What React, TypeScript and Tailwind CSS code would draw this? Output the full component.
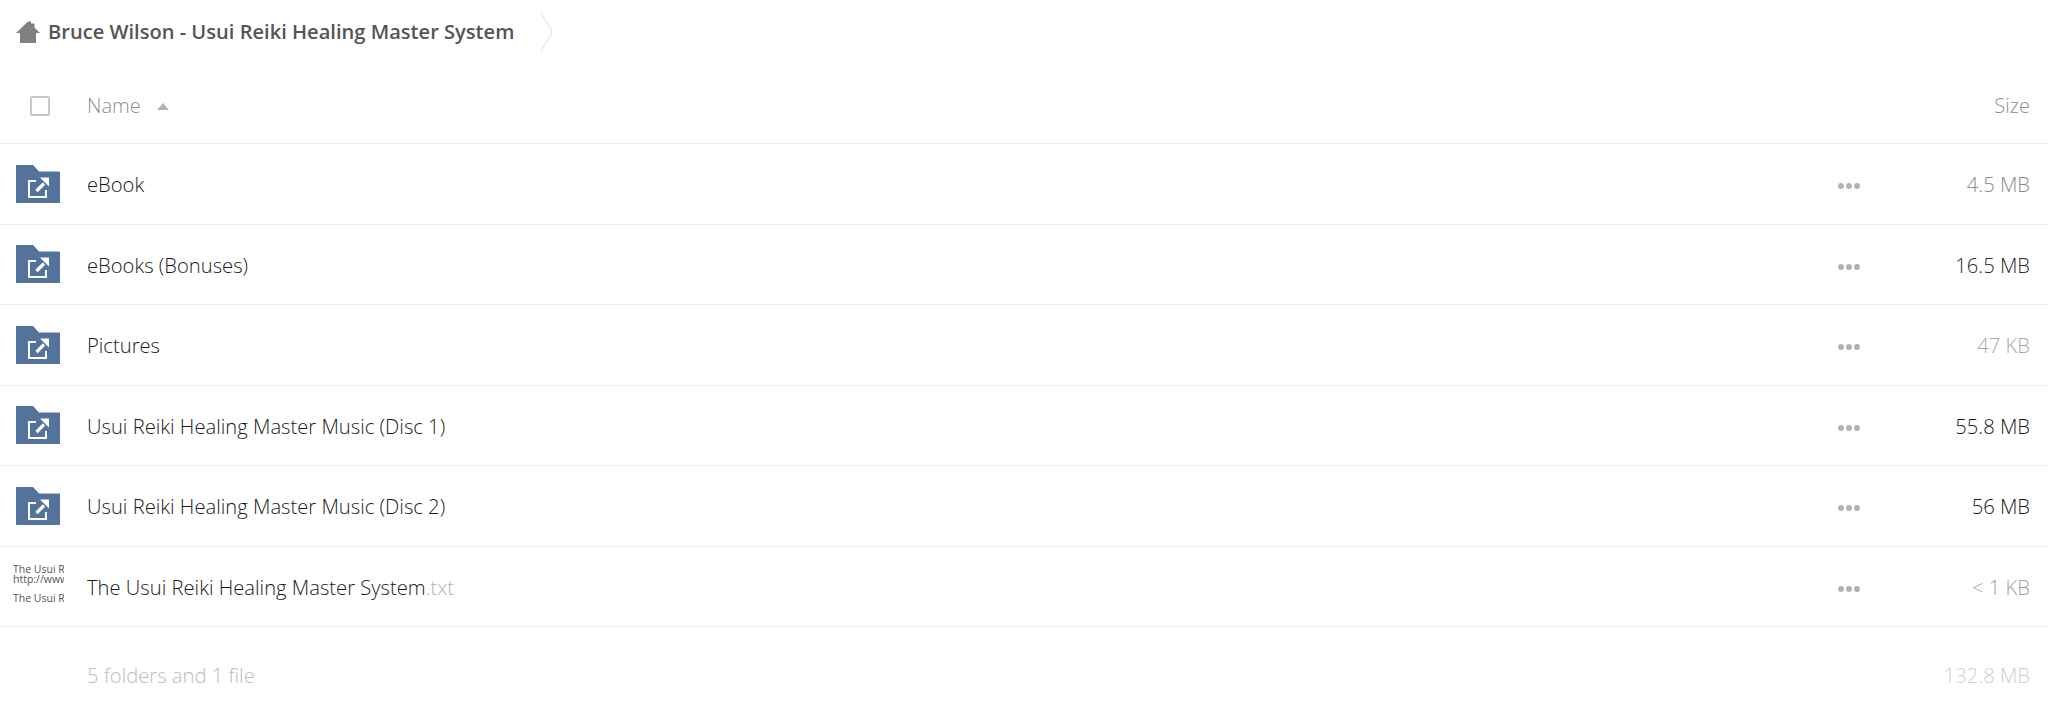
import React from "react";

const rows = [
  { name: "eBook", size: "4.5 MB", sizeColor: "text-[#8c8c8c]" },
  { name: "eBooks (Bonuses)", size: "16.5 MB", sizeColor: "text-[#2a2a2a]" },
  { name: "Pictures", size: "47 KB", sizeColor: "text-[#a8a8a8]" },
  { name: "Usui Reiki Healing Master Music (Disc 1)", size: "55.8 MB", sizeColor: "text-[#1a1a1a]" },
  { name: "Usui Reiki Healing Master Music (Disc 2)", size: "56 MB", sizeColor: "text-[#1a1a1a]" },
];

function FolderIcon() {
  return (
    <svg width="44" height="38" viewBox="0 0 44 38" className="block">
      <path
        d="M1 0H17L23 6.5H43C43.6 6.5 44 6.9 44 7.5V37C44 37.6 43.6 38 43 38H1C.4 38 0 37.6 0 37V1C0 .4 .4 0 1 0Z"
        fill="#54739c"
      />
      <path d="M20 16H13V32H30V25" fill="none" stroke="#fff" strokeWidth="2" />
      <path d="M20.5 26L28 18.5" stroke="#fff" strokeWidth="3.2" />
      <path d="M24 12.5H33V21.5Z" fill="#fff" />
    </svg>
  );
}

function HomeIcon() {
  return (
    <svg width="24" height="22" viewBox="0 0 24 22" className="block">
      <path d="M0 12L12 0.5H15V2.5L18.5 2.5V6.5L24 12H20V22H4V12Z" fill="#808080" />
    </svg>
  );
}

function Dots() {
  return (
    <div className="flex w-[23px] gap-[2px]">
      <span className="h-[6px] w-[6px] rounded-full bg-[#b3b3b3]" />
      <span className="h-[6px] w-[6px] rounded-full bg-[#b3b3b3]" />
      <span className="h-[6px] w-[6px] rounded-full bg-[#b3b3b3]" />
    </div>
  );
}

function Row({ icon, children, size, sizeColor }: { icon: React.ReactNode; children: React.ReactNode; size: string; sizeColor: string }) {
  return (
    <div className="flex h-[80.5px] items-center border-b border-[#eeeeee]">
      <div className="flex w-[87px] shrink-0 pl-4">{icon}</div>
      <div className="flex-1 pt-[1px] text-[20.2px] font-light text-[#1a1a1a]">{children}</div>
      <div className="mt-[5px]">
        <Dots />
      </div>
      <div className={`w-[187px] pt-[1px] pr-[18px] text-right text-[20.2px] font-light ${sizeColor}`}>{size}</div>
    </div>
  );
}

export default function App() {
  return (
    <div className="h-[722px] overflow-hidden bg-white font-['Open_Sans',sans-serif]">
      <div className="flex h-[63px] items-center pl-4">
        <HomeIcon />
        <span className="ml-[8px] pt-[1px] text-[20.1px] font-semibold text-[#555555]">Bruce Wilson - Usui Reiki Healing Master System</span>
        <svg width="14" height="40" viewBox="0 0 14 40" className="ml-[26px] block">
          <path d="M1 1L12.5 20L1 39" fill="none" stroke="#dddddd" strokeWidth="1" />
        </svg>
      </div>

      <div className="flex h-[81px] items-center border-b border-[#eeeeee] pt-[6px]">
        <div className="w-[87px] shrink-0 pl-[30px]">
          <div className="h-[20px] w-[20px] rounded-[2px] border-2 border-[#c8c8c8]" />
        </div>
        <span className="text-[20px] font-light text-[#8f8f8f]">Name</span>
        <span className="ml-[16px] h-0 w-0 border-x-[6.5px] border-b-[7px] border-x-transparent border-b-[#b3b3b3]" />
        <span className="ml-auto pr-[18px] text-[20px] font-light text-[#8f8f8f]">Size</span>
      </div>

      {rows.map((row) => (
        <Row key={row.name} icon={<FolderIcon />} size={row.size} sizeColor={row.sizeColor}>
          {row.name}
        </Row>
      ))}

      <Row
        size="< 1 KB"
        sizeColor="text-[#a0a0a0]"
        icon={
          <div className="-mt-[5px] -ml-[3px] w-[51px] overflow-hidden whitespace-nowrap text-[10.5px] leading-[10px] text-[#555555]">
            <div>The Usui R</div>
            <div>http://www</div>
            <div className="mt-[9px]">The Usui R</div>
          </div>
        }
      >
        The Usui Reiki Healing Master System<span className="text-[#b0b0b0]">.txt</span>
      </Row>

      <div className="flex h-[94px] items-center justify-between pt-[2px] pl-[87px] pr-[18px] text-[20.2px] font-light text-[#bdbdbd]">
        <span>5 folders and 1 file</span>
        <span className="text-[#d0d0d0]">132.8 MB</span>
      </div>
    </div>
  );
}
